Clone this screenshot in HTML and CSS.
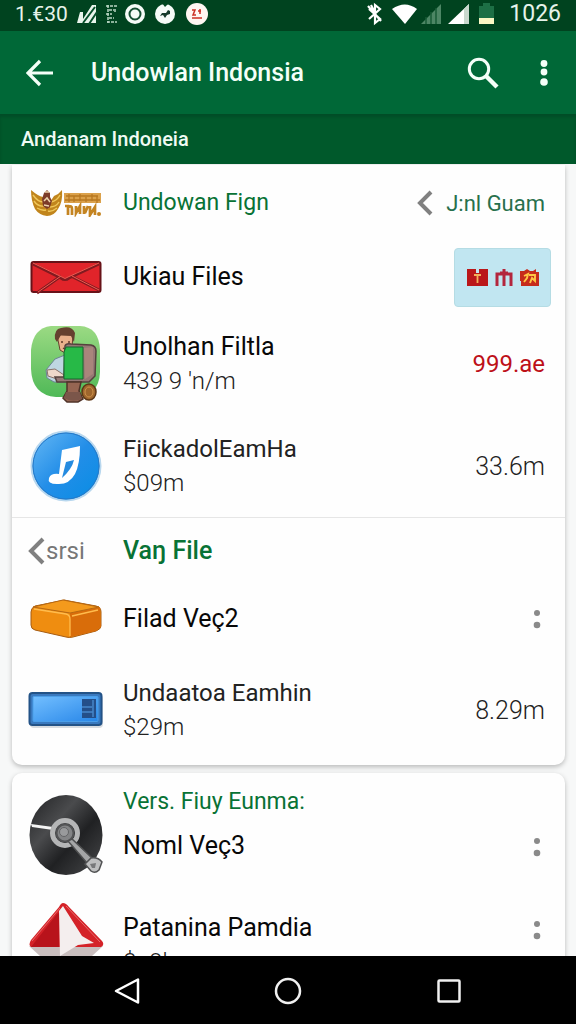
FILE: index.html
```html
<!DOCTYPE html>
<html lang="id">

<head>
    <meta charset="UTF-8">
    <meta name="viewport" content="width=device-width, initial-scale=1.0">
    <title>Undowlan Indonsia</title>
    <link rel="stylesheet" href="styles.css">
</head>

<body>

    <div class="status-bar">
        <span class="status-time">1.€30</span>
        <svg class="status-left" width="136" height="26" viewBox="0 0 136 26">
            <path d="M2 22L5 11H8V18L17 4H21V22Z" fill="#e9f5ec"/>
            <path d="M8 22L20 6M14 23L22 11" stroke="#064f2a" stroke-width="2"/>
            <path d="M31 5H42M34 9H39M31 13H37M34 17H39M32 21H42M33 4V22M40 8V12" stroke="#b9d6c4" stroke-width="1.5" stroke-dasharray="3 1" fill="none"/>
            <circle cx="60" cy="13" r="10" fill="#f5fbf7"/>
            <circle cx="60" cy="13" r="5.5" fill="none" stroke="#164f33" stroke-width="2"/>
            <circle cx="90" cy="13" r="10" fill="#f5fbf7"/>
            <path d="M87 2L90 6L93 3V1H88Z" fill="#00451f"/>
            <path d="M85 15L87 12L91 12L93 9L95 10V13L92 14L90 17L88 14Z" fill="#143a2a"/>
            <circle cx="122" cy="13" r="11" fill="#fff6f2"/>
            <path d="M117 9H120L118 14H121M125 8V13M123 10H126M117 17H127" stroke="#cb3024" stroke-width="1.5" fill="none"/>
        </svg>
        <svg class="status-right" width="134" height="26" viewBox="0 0 134 26">
            <path d="M6 8L17 18L12 22V4L17 8L6 18M5 5L18 20M8 4L12 12" stroke="#fff" stroke-width="2.2" fill="none"/>
            <path d="M29 8Q42-1 54 8L42 23Z" fill="#fff"/>
            <path d="M58 23L78 3V23Z" fill="#4d8665"/>
            <path d="M63 16V23M68 11V23M73 7V23" stroke="#175b36" stroke-width="1.5"/>
            <path d="M85 23L106 3V23Z" fill="#fff"/>
            <path d="M101 8L106 3V23H101Z" fill="#c9d8ce"/>
            <path d="M116 5H120V2H127V5H131V17H116Z" fill="#1d6f45"/>
            <path d="M116 17H131V23H116Z" fill="#fbf7c4"/>
        </svg>
        <span class="status-clock">1026</span>
    </div>

    <header class="app-bar">
        <button class="icon-button" aria-label="Back">
            <svg width="28" height="28" viewBox="0 0 28 28">
                <path d="M27 14H3M14 2L2 14L14 26" fill="none" stroke="#f4fff8" stroke-width="3.2"/>
            </svg>
        </button>
        <h1 class="app-title">Undowlan Indonsia</h1>
        <button class="icon-button search-button" aria-label="Search">
            <svg width="32" height="32" viewBox="0 0 32 32">
                <circle cx="12" cy="12" r="9.7" fill="none" stroke="#f4fff8" stroke-width="3"/>
                <path d="M19 19L30 30" stroke="#f4fff8" stroke-width="4.4"/>
            </svg>
        </button>
        <button class="icon-button" aria-label="More options">
            <svg width="8" height="28" viewBox="0 0 8 28" fill="#f4fff8">
                <circle cx="4" cy="4.5" r="3.4"/>
                <circle cx="4" cy="13" r="3.4"/>
                <circle cx="4" cy="23" r="3.8"/>
            </svg>
        </button>
    </header>

    <div class="sub-bar">Andanam Indoneia</div>

    <main class="content">
        <section class="card card-first">
            <div class="row row-head">
                <div class="row-icon">
                    <svg width="72" height="28" viewBox="0 0 72 28">
                        <path d="M1 1Q8 7 13 8L17 13H20L24 7Q29 5 32 1Q33 13 28 20Q24 27 17 27Q9 26 5 20Q1 12 1 1Z" fill="#c1851c"/>
                        <path d="M3 6Q8 13 13 13M4 12Q8 18 14 17M7 19Q12 22 16 21M30 6Q27 12 21 13M29 13Q26 18 20 18M27 19Q22 23 18 22" stroke="#f0c75a" stroke-width="1.4" fill="none"/>
                        <path d="M14 4L17 1L20 4V8L22 12L20 18L17 20L13 17L12 10Z" fill="#7c3b28"/>
                        <path d="M15 3H19M14 12L17 9L20 13M14 16L19 17" stroke="#ecd3ac" stroke-width="1.5" fill="none"/>
                        <path d="M34 4H71V14H34Z" fill="#dba14b"/>
                        <path d="M36 7H68M35 11H70M39 5V13M44 7V13M50 5V12M56 8V13M62 5V12M67 7V14" stroke="#b87821" stroke-width="1.3"/>
                        <path d="M35 17H38V26M38 18Q42 16 42 20V26M46 17V24L50 17V25M54 17V25M58 17L55 24M60 17V26L65 18V26" stroke="#c48421" stroke-width="2.7" fill="none"/>
                        <circle cx="69" cy="25" r="2" fill="#c48421"/>
                    </svg>
                </div>
                <h2 class="row-heading">Undowan Fign</h2>
                <a class="back-link" href="#">
                    <svg width="18" height="26" viewBox="0 0 18 26">
                        <path d="M15 2L4 13L15 24" fill="none" stroke="#808080" stroke-width="4"/>
                    </svg>
                    J:nl Guam
                </a>
            </div>
            <div class="row">
                <div class="row-icon">
                    <svg width="72" height="36" viewBox="0 0 72 36">
                        <rect x="1.5" y="3" width="69" height="30" rx="2" fill="#e1242a" stroke="#671218" stroke-width="2"/>
                        <path d="M3 5L31 19Q35 22 39 19L69 5M7 34L31 17M41 17L69 31" fill="none" stroke="#811a20" stroke-width="3"/>
                        <path d="M3 4L32 18Q35 21 38 18L69 4M8 33L31 17M42 17L69 31" fill="none" stroke="#f05a50" stroke-width="1"/>
                    </svg>
                </div>
                <div class="row-text">
                    <div class="row-title">Ukiau Files</div>
                </div>
                <div class="badge">
                    <svg width="72" height="22" viewBox="0 0 72 22">
                        <path d="M0 3H9V7H12V3H21V20H0Z" fill="#ba1719"/>
                        <path d="M7 9H14M10.5 10V17" stroke="#f4b05a" stroke-width="1.8"/>
                        <path d="M30 20V8H44V20M37 3V20M33 7H41" stroke="#b3263d" stroke-width="3" fill="none"/>
                        <path d="M53 5H57L60 3L63 5H66L69 3V6H72V20H54V15H53Z" fill="#c62b1b"/>
                        <path d="M57 10L61 8L60 12L57 16M62 9H68V15L65 12L63 17" stroke="#ffc543" stroke-width="1.9" fill="none"/>
                    </svg>
                </div>
            </div>
            <div class="row row-tall">
                <div class="row-icon">
                    <svg width="72" height="78" viewBox="0 0 72 78">
                        <defs>
                            <linearGradient id="leaf" x1="0" y1="0" x2="0" y2="1">
                                <stop offset="0" stop-color="#9bda83"/>
                                <stop offset="1" stop-color="#4fb957"/>
                            </linearGradient>
                        </defs>
                        <path d="M21 1H50Q69 2 70 25V47Q69 71 46 72H26Q2 70 1 44V25Q3 3 21 1Z" fill="url(#leaf)"/>
                        <path d="M25 34L35 30L43 37V57H24L17 53L16 45Z" fill="#bed6e1" stroke="#6b8593"/>
                        <path d="M27 10H43L42 22Q37 31 30 25Z" fill="#e9b18c" stroke="#68422f"/>
                        <path d="M25 14Q24 4 31 3Q42 0 45 8L44 17L41 11L31 10L27 17Z" fill="#65402f"/>
                        <path d="M31 17H33M38 17H40M33 23Q36 25 39 22" stroke="#603828" stroke-width="1.4" fill="none"/>
                        <path d="M17 45L25 44L34 50L33 56L18 51Z" fill="#efd8ca" stroke="#887169"/>
                        <path d="M35 21Q36 18 41 19L61 20Q66 21 66 26L65 51L59 57H27L25 52H34Z" fill="#967875" stroke="#55413e" stroke-width="1.5"/>
                        <path d="M36 22H53V54H34V27Z" fill="#27b947" stroke="#17672e"/>
                        <path d="M54 23L63 22V49L55 54Z" fill="#a9857c"/>
                        <path d="M37 57H51L49 66L53 74L48 77H37L33 73L37 66Z" fill="#966552" stroke="#503329" stroke-width="1.5"/>
                        <path d="M36 67H50L52 74Q42 78 34 73Z" fill="#7b564a"/>
                        <ellipse cx="59" cy="67" rx="7" ry="8" fill="#9e662d" stroke="#5e3716" stroke-width="1.5"/>
                        <ellipse cx="59" cy="67" rx="4" ry="5" fill="none" stroke="#d1944c"/>
                    </svg>
                </div>
                <div class="row-text">
                    <div class="row-title">Unolhan Filtla</div>
                    <div class="row-sub">439 9 'n/m</div>
                </div>
                <div class="row-value value-red">999.ae</div>
            </div>
            <div class="row row-tall">
                <div class="row-icon">
                    <svg width="72" height="74" viewBox="0 0 72 74">
                        <defs>
                            <linearGradient id="disc" x1="0" y1="0" x2="1" y2="1">
                                <stop offset="0" stop-color="#67b9f5"/>
                                <stop offset=".5" stop-color="#238ee8"/>
                                <stop offset="1" stop-color="#078de4"/>
                            </linearGradient>
                        </defs>
                        <circle cx="36" cy="37" r="34.5" fill="url(#disc)" stroke="#b8d7ee" stroke-width="2"/>
                        <circle cx="36" cy="37" r="33" fill="none" stroke="#2879c6"/>
                        <path d="M32 21L50 17Q50 35 45 45Q39 56 27 55Q17 55 19 49Q21 44 29 45Z" fill="#fff"/>
                        <path d="M36 33L44 31Q42 40 32 49Z" fill="#258be0"/>
                    </svg>
                </div>
                <div class="row-text">
                    <div class="row-title title-light">FiickadolEamHa</div>
                    <div class="row-sub">$09m</div>
                </div>
                <div class="row-value">33.6m</div>
            </div>
            <div class="row row-head row-divided">
                <a class="row-icon more-link" href="#">
                    <svg width="18" height="28" viewBox="0 0 18 28">
                        <path d="M15 2L3 14L15 26" fill="none" stroke="#808080" stroke-width="4"/>
                    </svg>
                    srsi
                </a>
                <h2 class="row-heading heading-strong">Vaŋ File</h2>
            </div>
            <div class="row">
                <div class="row-icon">
                    <svg width="72" height="40" viewBox="0 0 72 40">
                        <path d="M5 7L30 2Q34 0 39 2L66 7Q71 8 71 13V27Q71 30 66 32L43 38Q39 39 36 38L5 31Q1 30 1 26V13Q1 9 5 7Z" fill="#ef8d10" stroke="#a65c12"/>
                        <path d="M40 14L70 8L71 28L66 32L40 38Z" fill="#d96d0a"/>
                        <path d="M3 8L33 1L69 8L40 14Z" fill="#f49a1c" stroke="#b76812"/>
                        <path d="M4 10L36 15Q40 16 40 20V37M42 17L68 11" fill="none" stroke="#ffbc4d" stroke-width="1.3"/>
                    </svg>
                </div>
                <div class="row-text">
                    <div class="row-title">Filad Veç2</div>
                </div>
                <button class="row-menu" aria-label="Options for Filad Veç2">
                    <svg width="8" height="22" viewBox="0 0 8 22" fill="#8a8a8a"><circle cx="4" cy="5" r="3"/><circle cx="4" cy="17" r="3.3"/></svg>
                </button>
            </div>
            <div class="row row-tall">
                <div class="row-icon">
                    <svg width="76" height="38" viewBox="0 0 76 38">
                        <defs>
                            <linearGradient id="panel" x1="0" y1="0" x2="1" y2="1">
                                <stop offset="0" stop-color="#73bfff"/>
                                <stop offset="1" stop-color="#2786e8"/>
                            </linearGradient>
                        </defs>
                        <rect x="2" y="4" width="73" height="33" rx="4" fill="#d8dce0"/>
                        <rect x="1.5" y="2" width="72" height="32" rx="3" fill="#3979bf" stroke="#235387" stroke-width="2"/>
                        <rect x="5" y="5.5" width="65" height="25" rx="1" fill="url(#panel)" stroke="#4b9fe8"/>
                        <path d="M54 8H68V27H54Z" fill="#244f89"/>
                        <path d="M54 16H64M54 21H65M65 9V26" stroke="#4587c9" stroke-width="1.5"/>
                    </svg>
                </div>
                <div class="row-text">
                    <div class="row-title title-light">Undaatoa Eamhin</div>
                    <div class="row-sub">$29m</div>
                </div>
                <div class="row-value">8.29m</div>
            </div>
        </section>

        <section class="card">
            <div class="row row-feature">
                <div class="row-icon">
                    <svg width="76" height="82" viewBox="0 0 76 82">
                        <defs>
                            <linearGradient id="vinyl" x1="0" y1="0" x2="1" y2="1">
                                <stop offset="0" stop-color="#202123"/>
                                <stop offset=".35" stop-color="#4a4b4d"/>
                                <stop offset=".6" stop-color="#202123"/>
                                <stop offset="1" stop-color="#48494b"/>
                            </linearGradient>
                        </defs>
                        <ellipse cx="38" cy="41" rx="36.5" ry="40" fill="url(#vinyl)"/>
                        <path d="M3 30L25 33V36L4 33Z" fill="#f5f5f5"/>
                        <circle cx="37" cy="39" r="12.5" fill="none" stroke="#b5b6b7" stroke-width="5"/>
                        <circle cx="37" cy="39" r="8.5" fill="#838486" stroke="#535456" stroke-width="2"/>
                        <circle cx="36" cy="38" r="4.5" fill="#999a9c" stroke="#636466"/>
                        <path d="M40 47L44 45L64 64L59 69Z" fill="#a5a6a7" stroke="#4f5051" stroke-width="1.5"/>
                        <path d="M57 70L63 64Q70 63 74 68L71 76Q67 80 63 77Z" fill="#bdbebf" stroke="#515253" stroke-width="1.5"/>
                        <path d="M62 70L68 69L67 74L64 74Z" fill="#77787a"/>
                    </svg>
                </div>
                <div class="row-text">
                    <h2 class="row-heading">Vers. Fiuy Eunma:</h2>
                    <div class="row-title">Noml Veç3</div>
                </div>
                <button class="row-menu" aria-label="Options for Noml Veç3">
                    <svg width="8" height="22" viewBox="0 0 8 22" fill="#8a8a8a"><circle cx="4" cy="5" r="3"/><circle cx="4" cy="17" r="3.3"/></svg>
                </button>
            </div>
            <div class="row row-last">
                <div class="row-icon">
                    <svg width="76" height="84" viewBox="0 0 76 84">
                        <path d="M1 43L35 44L75 43L64 53H12Z" fill="#c9bebe"/>
                        <path d="M35 0Q38 0 41 4L74 38Q77 42 73 44H3Q0 42 3 37L31 4Q33 0 35 0Z" fill="#d42228"/>
                        <path d="M31 10V44H3L29 11Z" fill="#b8131b"/>
                        <path d="M31 8L35 3L54 33L66 40L50 42L32 53Z" fill="#f4eeee"/>
                        <path d="M4 38L32 5M38 3L72 39" stroke="#e86b6b" stroke-width="1" fill="none"/>
                    </svg>
                </div>
                <div class="row-text">
                    <div class="row-title">Patanina Pamdia</div>
                    <div class="row-sub">$a9h</div>
                </div>
                <button class="row-menu" aria-label="Options for Patanina Pamdia">
                    <svg width="8" height="22" viewBox="0 0 8 22" fill="#8a8a8a"><circle cx="4" cy="5" r="3"/><circle cx="4" cy="17" r="3.3"/></svg>
                </button>
            </div>
        </section>
    </main>

    <nav class="nav-bar">
        <button class="icon-button" aria-label="Back">
            <svg width="28" height="28" viewBox="0 0 28 28"><path d="M25 2.5V25.5L3 14Z" fill="none" stroke="#fff" stroke-width="2.5" stroke-linejoin="round"/></svg>
        </button>
        <button class="icon-button" aria-label="Home">
            <svg width="28" height="28" viewBox="0 0 28 28"><circle cx="14" cy="14" r="12" fill="none" stroke="#f0f0f0" stroke-width="2.5"/></svg>
        </button>
        <button class="icon-button" aria-label="Recent apps">
            <svg width="28" height="28" viewBox="0 0 28 28"><rect x="3.5" y="3.5" width="21" height="21" rx="1" fill="none" stroke="#f0f0f0" stroke-width="2.5"/></svg>
        </button>
    </nav>

</body>

</html>
```

FILE: styles.css
```css
* {
    box-sizing: border-box;
}

body {
    display: flex;
    flex-direction: column;
    height: 100vh;
    margin: 0;
    overflow: hidden;
    background-color: #f7f8f8;
    color: #080808;
    font-family: Roboto, "Liberation Sans", sans-serif;
}

h1,
h2 {
    margin: 0;
    font-weight: 400;
}

svg {
    display: block;
    flex-shrink: 0;
}

button {
    padding: 0;
    border: none;
    background: none;
    cursor: pointer;
}

a {
    text-decoration: none;
}

.status-bar {
    display: flex;
    align-items: center;
    flex-shrink: 0;
    height: 31px;
    padding: 0 15px 4px;
    background-color: #00431f;
    color: #e6f3ea;
    font-size: 23px;
}

.status-time {
    font-size: 21px;
}

.status-left {
    margin-left: 7px;
}

.status-right {
    margin-left: auto;
    margin-right: 12px;
}

.app-bar {
    display: flex;
    align-items: center;
    flex-shrink: 0;
    height: 83px;
    padding: 0 28px 0 26px;
    background-color: #006837;
}

.icon-button {
    display: flex;
    align-items: center;
    justify-content: center;
}

.app-title {
    flex: 1;
    margin-left: 37px;
    color: #f4fff8;
    font-size: 25px;
    font-weight: 500;
}

.search-button {
    margin-right: 41px;
}

.sub-bar {
    flex-shrink: 0;
    height: 50px;
    padding-left: 21px;
    background-color: #00592b;
    box-shadow: inset 0 3px 3px #004d27;
    color: #f0fbf4;
    font-size: 20px;
    font-weight: 500;
    line-height: 50px;
}

.content {
    flex: 1;
    min-height: 0;
    padding: 1px 11px 0 12px;
    overflow: hidden;
}

.card {
    margin-bottom: 8px;
    border-radius: 10px;
    background-color: #fefefe;
    box-shadow: 0 2px 5px rgba(0, 0, 0, 0.25);
}

.card-first {
    border-radius: 0 0 10px 10px;
}

.row {
    display: flex;
    align-items: center;
    min-height: 72px;
    padding: 0 20px 0 16px;
}

.row-head {
    min-height: 76px;
}

.row-tall {
    min-height: 102px;
}

.row-divided {
    min-height: 66px;
    border-top: 1px solid #e6e6e6;
}

.row-tall:last-child {
    min-height: 110px;
}

.row-icon {
    display: flex;
    align-items: center;
    justify-content: center;
    flex-shrink: 0;
    width: 76px;
    margin-right: 19px;
}

.row-text {
    flex: 1;
}

.row-title {
    font-size: 25px;
    line-height: 34px;
}

.title-light {
    color: #222;
    font-size: 24px;
}

.row-sub {
    color: #222;
    font-size: 24px;
    font-weight: 300;
    line-height: 34px;
}

.row-heading {
    flex: 1;
    color: #087235;
    font-size: 23px;
    line-height: 34px;
}

.heading-strong {
    font-size: 25px;
    font-weight: 500;
}

.row-value {
    color: #222;
    font-size: 25px;
    font-weight: 300;
}

.value-red {
    color: #bd1018;
    font-size: 24px;
    font-weight: 400;
}

.back-link {
    display: flex;
    align-items: center;
    gap: 12px;
    color: #28704c;
    font-size: 22px;
}

.more-link {
    justify-content: flex-start;
    color: #777;
    font-size: 24px;
}

.badge {
    display: flex;
    align-items: center;
    justify-content: center;
    width: 97px;
    height: 59px;
    margin-right: -6px;
    border: 1px solid #b5dce4;
    border-radius: 4px;
    background-color: #c1e6f1;
}

.row-menu {
    display: flex;
    align-items: center;
    justify-content: center;
    width: 16px;
    height: 48px;
}

.row-feature {
    min-height: 124px;
}

.row-feature .row-text {
    align-self: flex-start;
    padding-top: 7px;
}

.row-feature .row-heading,
.row-feature .row-title {
    line-height: 44px;
}

.row-feature .row-menu {
    align-self: flex-end;
    height: 100px;
}

.row-last {
    min-height: 96px;
}

.row-last .row-menu {
    align-self: flex-start;
    height: 66px;
}

.nav-bar {
    display: flex;
    align-items: center;
    justify-content: space-around;
    flex-shrink: 0;
    height: 68px;
    padding: 2px 46px 0;
    background-color: #000;
}
```
